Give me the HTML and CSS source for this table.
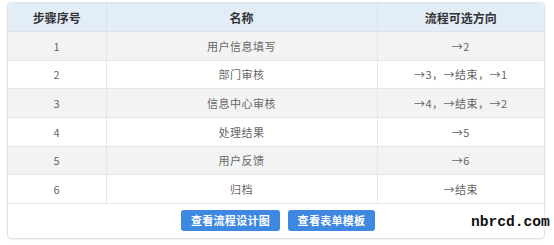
FILE: index.html
```html
<!DOCTYPE html>
<html lang="zh-CN">
<head>
<meta charset="utf-8">
<title>流程步骤</title>
<link rel="stylesheet" href="styles.css">
</head>
<body>
<div class="card">
  <table class="flow">
    <colgroup>
      <col class="c1"><col class="c2"><col class="c3">
    </colgroup>
    <thead>
      <tr><th>步骤序号</th><th>名称</th><th>流程可选方向</th></tr>
    </thead>
    <tbody>
      <tr><td>1</td><td>用户信息填写</td><td>→2</td></tr>
      <tr><td>2</td><td>部门审核</td><td>→3，→结束，→1</td></tr>
      <tr><td>3</td><td>信息中心审核</td><td>→4，→结束，→2</td></tr>
      <tr><td>4</td><td>处理结果</td><td>→5</td></tr>
      <tr><td>5</td><td>用户反馈</td><td>→6</td></tr>
      <tr><td>6</td><td>归档</td><td>→结束</td></tr>
    </tbody>
  </table>
  <div class="actions">
    <button class="btn btn-wide">查看流程设计图</button>
    <button class="btn">查看表单模板</button>
  </div>
</div>
<div class="watermark">nbrcd.com</div>
</body>
</html>
```
FILE: styles.css
```css
html, body {
  margin: 0;
  padding: 0;
  background: #ffffff;
}
body {
  font-family: "Liberation Sans", "Noto Sans CJK SC", sans-serif;
  position: relative;
  width: 554px;
  height: 245px;
  overflow: hidden;
}
.card {
  margin: 2px 0 0 7px;
  width: 538px;
  box-sizing: border-box;
  border: 1px solid #e2e2e2;
  border-radius: 4px;
  overflow: hidden;
  background: #fff;
  box-shadow: 0 1px 2px rgba(0,0,0,0.06);
}
.flow {
  width: 100%;
  border-collapse: collapse;
  table-layout: fixed;
}
.c1 { width: 98px; }
.c2 { width: 271px; }
.c3 { width: auto; }
.flow th {
  height: 28px;
  padding: 0;
  background: #e2edf8;
  color: #333;
  font-size: 12px;
  font-weight: bold;
  text-align: center;
  border-right: 1px solid #d8e2ec;
  border-bottom: 1px solid #dde3ea;
}
.flow td {
  height: 27.67px;
  padding: 0;
  font-family: "Noto Sans CJK SC", sans-serif;
  font-size: 11px;
  letter-spacing: 0.5px;
  color: #666;
  text-align: center;
  border-right: 1px solid #e6e6e6;
  border-bottom: 1px solid #e6e6e6;
}
.flow th:last-child, .flow td:last-child { border-right: none; }
.flow tbody tr:nth-child(odd) td { background: #f3f3f3; }
.flow tbody tr:nth-child(even) td { background: #ffffff; }
.actions {
  display: flex;
  justify-content: center;
  gap: 8px;
  padding: 6px 0 7px 4px;
}
.btn {
  height: 21px;
  width: 87px;
  padding: 0;
  border: none;
  border-radius: 3px;
  background: #3f88e2;
  color: #fff;
  font-family: "Noto Sans CJK SC", sans-serif;
  font-size: 11px;
  font-weight: bold;
  letter-spacing: 0.3px;
}
.btn-wide { width: 99px; }
.watermark {
  position: absolute;
  left: 471px;
  top: 214px;
  font-family: "Liberation Mono", monospace;
  font-weight: bold;
  font-size: 14.6px;
  color: #111;
  background: rgba(255,255,255,0.6);
}
```
